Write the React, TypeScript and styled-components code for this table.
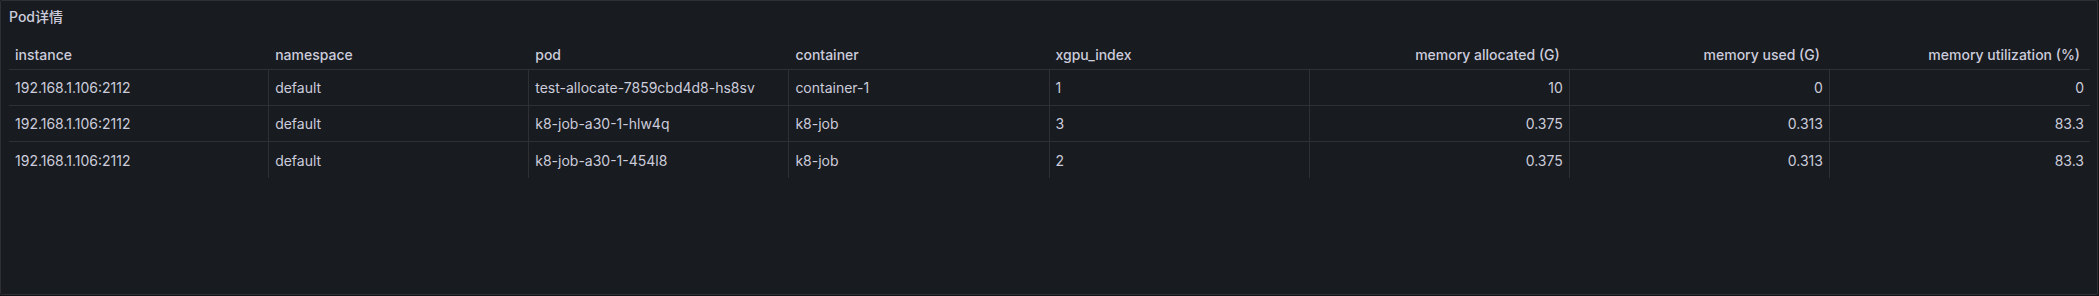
import { createGlobalStyle } from 'styled-components'
import styled, { css } from 'styled-components'

type Align = 'left' | 'right'

interface Column {
  key: string
  title: string
  align: Align
}

const COLUMNS: Column[] = [
  { key: 'instance', title: 'instance', align: 'left' },
  { key: 'namespace', title: 'namespace', align: 'left' },
  { key: 'pod', title: 'pod', align: 'left' },
  { key: 'container', title: 'container', align: 'left' },
  { key: 'xgpu_index', title: 'xgpu_index', align: 'left' },
  { key: 'allocated', title: 'memory allocated (G)', align: 'right' },
  { key: 'used', title: 'memory used (G)', align: 'right' },
  { key: 'utilization', title: 'memory utilization (%)', align: 'right' },
]

const ROWS: Record<string, string>[] = [
  {
    instance: '192.168.1.106:2112',
    namespace: 'default',
    pod: 'test-allocate-7859cbd4d8-hs8sv',
    container: 'container-1',
    xgpu_index: '1',
    allocated: '10',
    used: '0',
    utilization: '0',
  },
  {
    instance: '192.168.1.106:2112',
    namespace: 'default',
    pod: 'k8-job-a30-1-hlw4q',
    container: 'k8-job',
    xgpu_index: '3',
    allocated: '0.375',
    used: '0.313',
    utilization: '83.3',
  },
  {
    instance: '192.168.1.106:2112',
    namespace: 'default',
    pod: 'k8-job-a30-1-454l8',
    container: 'k8-job',
    xgpu_index: '2',
    allocated: '0.375',
    used: '0.313',
    utilization: '83.3',
  },
]

const GlobalStyle = createGlobalStyle`
  html, body {
    margin: 0;
    padding: 0;
    background: #111217;
  }
  body {
    font-family: Inter, "Noto Sans CJK SC", sans-serif;
    color: #ccccdc;
    -webkit-font-smoothing: antialiased;
  }
`

const Panel = styled.section`
  box-sizing: border-box;
  width: 2098px;
  height: 295px;
  background: #181b1f;
  border: 1px solid rgba(204, 204, 220, 0.12);
  border-radius: 2px;
  display: flex;
  flex-direction: column;
`

const PanelHeader = styled.header`
  height: 32px;
  padding: 0 8px;
  display: flex;
  align-items: center;
  flex-shrink: 0;
`

const PanelTitle = styled.h2`
  margin: 0;
  font-size: 14px;
  font-weight: 500;
  line-height: 1;
  color: #ccccdc;
`

const PanelBody = styled.div`
  padding: 0 7px 0 8px;
  flex: 1;
`

const Grid = styled.div`
  display: grid;
  grid-template-columns: repeat(${COLUMNS.length}, 1fr);
`

const HeaderRow = styled(Grid)`
  height: 37px;
  box-sizing: border-box;
  border-bottom: 1px solid rgba(204, 204, 220, 0.12);
`

const BodyRow = styled(Grid)<{ last?: boolean }>`
  height: 36px;
  box-sizing: border-box;
  ${({ last }) =>
    !last &&
    css`
      border-bottom: 1px solid rgba(204, 204, 220, 0.12);
    `}
`

const HeaderCell = styled.div<{ align: Align }>`
  display: flex;
  align-items: flex-end;
  justify-content: ${({ align }) => (align === 'right' ? 'flex-end' : 'flex-start')};
  padding: 0 ${({ align }) => (align === 'right' ? '10px' : '6px')} 6px 6px;
  font-size: 14px;
  font-weight: 500;
  line-height: 17px;
  color: #ccccdc;
  white-space: nowrap;
`

const Cell = styled.div<{ align: Align; edge?: boolean }>`
  display: flex;
  align-items: center;
  justify-content: ${({ align }) => (align === 'right' ? 'flex-end' : 'flex-start')};
  padding: 0 6px;
  font-size: 14px;
  font-weight: 400;
  color: #ccccdc;
  white-space: nowrap;
  ${({ edge }) =>
    !edge &&
    css`
      border-right: 1px solid rgba(204, 204, 220, 0.12);
    `}
`

export default function App() {
  return (
    <>
      <GlobalStyle />
      <Panel>
        <PanelHeader>
          <PanelTitle>Pod详情</PanelTitle>
        </PanelHeader>
        <PanelBody>
          <HeaderRow>
            {COLUMNS.map(col => (
              <HeaderCell key={col.key} align={col.align}>
                {col.title}
              </HeaderCell>
            ))}
          </HeaderRow>
          {ROWS.map((row, i) => (
            <BodyRow key={i} last={i === ROWS.length - 1}>
              {COLUMNS.map((col, j) => (
                <Cell key={col.key} align={col.align} edge={j === COLUMNS.length - 1}>
                  {row[col.key]}
                </Cell>
              ))}
            </BodyRow>
          ))}
        </PanelBody>
      </Panel>
    </>
  )
}
